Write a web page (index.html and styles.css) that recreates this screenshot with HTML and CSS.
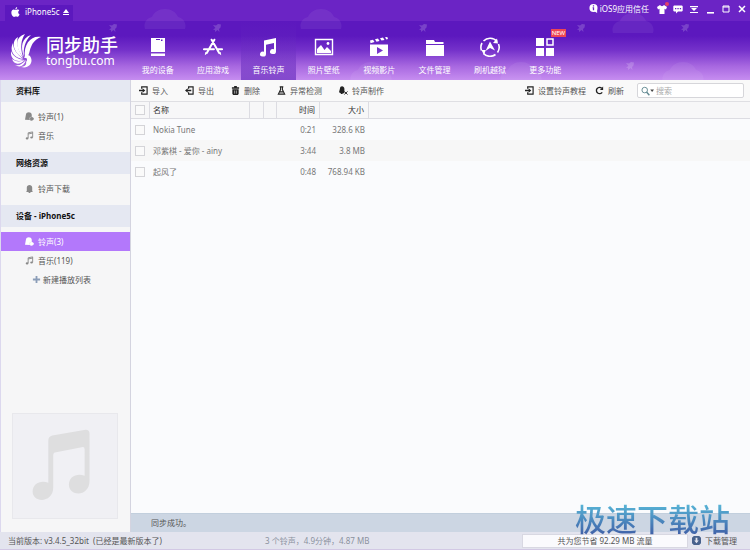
FILE: index.html
```html
<!DOCTYPE html>
<html lang="zh-CN">
<head>
<meta charset="UTF-8" />
<meta name="viewport" content="width=device-width, initial-scale=1" />
<title>同步助手</title>
<link rel="stylesheet" href="styles.css">
</head>
<body>

<!-- Shared icon shapes -->
<svg class="sprite" aria-hidden="true">
  <symbol id="cloud" viewBox="0 0 42 20"><path d="M1 20C-1 14 3 9 8 8 10 3 15 0 21 0s11 3 13 8c5 1 9 6 7 12z" /></symbol>
  <symbol id="plane" viewBox="0 0 8 8"><path d="M0 1l3 .5L5 0l3 .5-.5 3L6 5l.5 3-2-2L2 8V6L0 5.500 2.500 4z" /></symbol>
  <symbol id="note" viewBox="0 0 20 20"><path d="M6 3.500L18 1v13.500a3 2.500 0 1 1-2-2.300V6L8 7.700V17a3 2.500 0 1 1-2-2.300z" /></symbol>
  <symbol id="note-line" viewBox="0 0 10 10"><path d="M3.500 8V2l5-1v6M3.500 3.300l5-1" fill="none" stroke="currentColor" /><ellipse cx="2.300" cy="8.200" rx="1.500" ry="1.200" /><ellipse cx="7.300" cy="7.200" rx="1.500" ry="1.200" /></symbol>
  <symbol id="bell" viewBox="0 0 10 10"><path d="M2 8V4c0-4 6-4 6 0v4l1 1H1zM4 9h2v1H4z" /></symbol>
  <symbol id="bells" viewBox="0 0 10 10"><path d="M0 8.500L1 3C1.500-.5 7-.5 7.500 3v2.500C10 6 10.500 8 9 9 8 10 6 10 5.500 9z" /><path d="M7.200 5.500L5 6.500 5.500 9" fill="none" stroke="#ddd" stroke-width=".5" /></symbol>
  <symbol id="import" viewBox="0 0 10 10"><path d="M3 3V1h6v8H3V7" fill="none" stroke="currentColor" stroke-width="1.300" /><path d="M0 4.300h4V2.500L7 5 4 7.500V5.700H0z" /></symbol>
  <symbol id="export" viewBox="0 0 10 10"><path d="M4 3V1h5v8H4V7" fill="none" stroke="currentColor" stroke-width="1.300" /><path d="M7 4.300H3V2.500L0 5l3 2.500V5.700h4z" /></symbol>
</svg>

<div class="window">
  <header class="header">
    <div class="sky" aria-hidden="true">
      <svg class="cloud cloud-1"><use href="#cloud" /></svg>
      <svg class="cloud cloud-2"><use href="#cloud" /></svg>
      <svg class="cloud cloud-3"><use href="#cloud" /></svg>
      <svg class="cloud cloud-4"><use href="#cloud" /></svg>
      <svg class="cloud cloud-5"><use href="#cloud" /></svg>
      <svg class="cloud cloud-6"><use href="#cloud" /></svg>
      <svg class="plane plane-1"><use href="#plane" /></svg>
      <svg class="plane plane-2"><use href="#plane" /></svg>
      <svg class="plane plane-3"><use href="#plane" /></svg>
      <svg class="plane plane-4"><use href="#plane" /></svg>
      <svg class="plane plane-5"><use href="#plane" /></svg>
      <svg class="plane plane-6"><use href="#plane" /></svg>
    </div>

    <div class="titlebar">
      <button class="device-tab" type="button">
        <svg class="apple" viewBox="0 0 10 12"><path d="M7 0c0 2-1 3-2.200 3C4.700 1.500 6 .3 7 0zM5 3.700c1 0 1.500-.7 2.500-.6 1 0 1.800.7 2 1.200-2 1-1.500 3.700.4 4.400C9 11 8 12 7 11.800c-1-.4-2-.4-3 0C2 12.500 0 9.500 0 7c0-3 2-4.200 3.500-3.800z" /></svg>
        iPhone5c
        <svg class="eject" viewBox="0 0 6 6"><path d="M3 0l3 4H0zM0 5h6v1H0z" /></svg>
      </button>
      <div class="window-tools">
        <a class="trust" href="#"><svg viewBox="0 0 10 10"><circle cx="5" cy="4.500" r="4.500" /><path d="M6 8l3 2V6z" /><path d="M4.300 1.500h1.400v1.300H4.300zM4 3.700h1.700V7H4.300V4.700H4z" fill="#6822c4" /></svg>iOS9应用信任</a>
        <button class="tool skin" type="button" aria-label="皮肤"><svg viewBox="0 0 10 10"><path d="M0 3l3-2c1 1.500 3 1.500 4 0l3 2-1 2.500-1.500-.7V10h-5V4.800L1 5.500z" /></svg></button>
        <button class="tool" type="button" aria-label="反馈"><svg viewBox="0 0 10 10"><path d="M1 1.500h8l.7.700v4.600l-.7.700H5l-2 2v-2H1l-.7-.7V2.200z" /><path d="M2 4h1.300v1.300H2zM4.400 4h1.300v1.300H4.400zM6.800 4h1.300v1.300H6.800z" fill="#6822c4" /></svg></button>
        <button class="tool" type="button" aria-label="菜单"><svg viewBox="0 0 10 10"><path d="M1 2h8v1.200H1zM2 4h6L5 7zM1 8h8v1H1z" /></svg></button>
        <button class="tool" type="button" aria-label="最小化"><svg viewBox="0 0 10 10"><path d="M2 8h7v1.600H2z" /></svg></button>
        <button class="tool" type="button" aria-label="最大化"><svg viewBox="0 0 10 10"><path d="M2 2h6v6H2zM2 3h6" fill="none" stroke="#fff" /></svg></button>
        <button class="tool" type="button" aria-label="关闭"><svg viewBox="0 0 10 10"><path d="M2 2l6 6M8 2L2 8" stroke="#fff" stroke-width="1.500" /></svg></button>
      </div>
    </div>

    <div class="main-bar">
      <a class="brand" href="#">
        <svg class="brand-mark" viewBox="0 0 30 34">
          <path d="M30 3C21 1 12 9 14 24c5-2 4-7 6-11 2-5 5-8 10-10z" />
          <path d="M20 1c-9 3-11 11-7 22-1-9 1-16 7-22z" />
          <path d="M14 0C4 3 4 13 12 23 9 13 10 6 14 0z" />
          <path d="M7 3C-1 8 3 19 12 24 7 15 5 10 7 3z" />
          <path d="M2 9c-4 8 1 15 10 16C6 20 2 15 2 9z" />
          <path d="M0 17c-1 8 5 12 13 9C6 25 2 22 0 17z" />
          <path d="M1 25c2 6 8 6 13 1-5 2-9 2-13-1z" />
          <path d="M4 31c5 3 9 1 11-5-4 4-6 6-11 5z" />
          <path d="M10 33c8 2 12-4 10-9-1-4-6-4-7 0 3-1 4 2 2 4 1 2-1 5-5 5z" />
        </svg>
        <span class="brand-text"><strong>同步助手</strong><span>tongbu.com</span></span>
      </a>
      <nav class="nav">
        <a href="#"><svg viewBox="0 0 20 20"><path d="M3 1h14v14H3zM3 16.500h14V19H3z" /><path d="M8 2h4v1H8zM13 2.500h1.500V4H13z" fill="#5d19bd" /></svg>我的设备</a>
        <a href="#"><svg viewBox="0 0 22 20"><path d="M12.500 2L4.500 16M9.500 2l8 14M1 12.500h11M16 12.500h5" fill="none" stroke="#fff" stroke-width="2.200" stroke-linecap="round" /><path d="M2.500 15.500l3 1L2 19zM19.500 15.500l-3 1L20 19z" /></svg>应用游戏</a>
        <a class="active" href="#"><svg viewBox="0 0 20 20"><use href="#note" /></svg>音乐铃声</a>
        <a href="#"><svg viewBox="0 0 20 20"><path d="M1.500 2.500h17v15h-17z" fill="none" stroke="#fff" stroke-width="1.400" /><path d="M3 16v-4l4-4 3.500 5 2.500-3 4 4v2z" /><circle cx="14" cy="6.500" r="1.400" /></svg>照片壁纸</a>
        <a href="#"><svg viewBox="0 0 20 20"><path fill-rule="evenodd" d="M1 7.500h18V19H1zM8 10v7l6-3.500zM1 3.500L4 2.700 5.500 5l-4 1.200zM6 2.200l3-.7L10.500 4l-3 .7zM11 1.200l3-.7L15.500 3l-3 .6zM16 .2l2.300-.2.7 2-1.600.500z" /></svg>视频影片</a>
        <a href="#"><svg viewBox="0 0 20 20"><path d="M1 3h8l1 2h8.500v2H1zM1 8h18v11H1z" /></svg>文件管理</a>
        <a href="#"><svg viewBox="0 0 20 20"><path d="M3.500 4A9 9 0 0 1 17 4.500M18.500 7a9 9 0 0 1-1 8.500M15.500 17.500a9 9 0 0 1-12-1M1.500 13.500A9 9 0 0 1 2 6" fill="none" stroke="#fff" stroke-width="1.600" /><path d="M17 1.500l1 5-5-.5zM1.500 13h4.300L4 18z" /><path d="M10 4.500l5 9-5-2.500-4.500 3z" /></svg>刷机越狱</a>
        <a href="#"><svg viewBox="0 0 20 20"><path d="M1 1h8v8H1zM1 11h8v8H1zM11 11h8v8h-8z" /><path d="M12 2h6v6h-6z" fill="none" stroke="#fff" stroke-width="1.500" /></svg>更多功能<span class="badge">NEW</span></a>
      </nav>
    </div>
  </header>

  <div class="body">
    <aside class="sidebar">
      <section>
        <h2>资料库</h2>
        <a href="#"><svg><use href="#bells" /></svg>铃声(1)</a>
        <a href="#"><svg><use href="#note-line" /></svg>音乐</a>
      </section>
      <section>
        <h2>网络资源</h2>
        <a href="#"><svg><use href="#bell" /></svg>铃声下载</a>
      </section>
      <section>
        <h2>设备 - iPhone5c</h2>
        <a class="active" href="#"><svg><use href="#bells" /></svg>铃声(3)</a>
        <a href="#"><svg><use href="#note-line" /></svg>音乐(119)</a>
        <a class="new-list" href="#"><svg viewBox="0 0 10 10"><path d="M4 1h2v3h3v2H6v3H4V6H1V4h3z" /></svg>新建播放列表</a>
      </section>
      <div class="artwork">
        <svg viewBox="0 0 106 106"><path d="M36 27q0-4 4-5l34-6q4 0 4 4v48c0 17-21 16-21 4 0-8 8-12 16-9V36q0-3-3-2l-26 5q-3 0-3 3v33c0 16-21 16-21 4 0-8 8-12 16-9z" /></svg>
      </div>
    </aside>

    <main class="content">
      <div class="toolbar">
        <button type="button"><svg><use href="#import" /></svg>导入</button>
        <button type="button"><svg><use href="#export" /></svg>导出</button>
        <button type="button"><svg viewBox="0 0 10 10"><path d="M1 1.500h2.500V0h3v1.500H9V3H1zM1.500 3.500h7V9l-1 1h-5l-1-1z" /><path d="M4 5v3.500M6 5v3.500" stroke="#f8f8f8" stroke-width=".6" /></svg>删除</button>
        <button type="button"><svg viewBox="0 0 10 10"><path d="M3 1h4M4 1v3L1.500 9h7L6 4V1M3 6.500h4" fill="none" stroke="currentColor" stroke-width="1.200" /></svg>异常检测</button>
        <button type="button"><svg viewBox="0 0 10 10"><path d="M0 7l1-4c0-4 5-3.500 5 0v5H4v1H2V8z" /><path d="M6 6l3.500 3.500M9.500 6L6 9.500" stroke="currentColor" /></svg>铃声制作</button>
        <div class="toolbar-end">
          <button type="button"><svg><use href="#import" /></svg>设置铃声教程</button>
          <button type="button"><svg viewBox="0 0 10 10"><path d="M7.500 2.500A3.500 3.500 0 1 0 8 7" fill="none" stroke="currentColor" stroke-width="1.500" /><path d="M5.500 4.500L9 .5v4z" /></svg>刷新</button>
          <label class="search">
            <svg viewBox="0 0 14 10"><circle cx="4" cy="4" r="3" fill="none" stroke="#608890" /><path d="M6 6l3 3.500" stroke="#608890" stroke-width="1.500" /><path d="M10 3.500h4L12 6z" fill="#444" /></svg>
            <input type="search" placeholder="搜索" aria-label="搜索" />
          </label>
        </div>
      </div>

      <table class="tracks">
        <thead>
          <tr>
            <th class="check"><input type="checkbox" aria-label="全选" /></th>
            <th class="name">名称</th>
            <th class="slim-a"></th>
            <th class="slim-b"></th>
            <th class="time">时间</th>
            <th class="size">大小</th>
            <th class="rest"></th>
          </tr>
        </thead>
        <tbody>
          <tr>
            <td class="check"><input type="checkbox" aria-label="Nokia Tune" /></td>
            <td>Nokia Tune</td><td></td><td></td>
            <td class="time">0:21</td>
            <td class="size">328.6 KB</td><td></td>
          </tr>
          <tr>
            <td class="check"><input type="checkbox" aria-label="邓紫棋 - 爱你 - ainy" /></td>
            <td>邓紫棋 - 爱你 - ainy</td><td></td><td></td>
            <td class="time">3:44</td>
            <td class="size">3.8 MB</td><td></td>
          </tr>
          <tr>
            <td class="check"><input type="checkbox" aria-label="起风了" /></td>
            <td>起风了</td><td></td><td></td>
            <td class="time">0:48</td>
            <td class="size">768.94 KB</td><td></td>
          </tr>
        </tbody>
      </table>

      <p class="status">同步成功。</p>
    </main>
  </div>

  <footer class="footer">
    <span class="version">当前版本: v3.4.5_32bit&nbsp; (已经是最新版本了)</span>
    <span class="summary">3 个铃声，4.9分钟，4.87 MB</span>
    <span class="saved">共为您节省 92.29 MB 流量</span>
    <a class="downloads" href="#"><svg viewBox="0 0 10 10"><path fill-rule="evenodd" d="M2 0h6l2 2v6L8 10H2L0 8V2zM4 2v3H2.500L5 8l2.500-3H6V2z" /></svg>下载管理</a>
  </footer>
  <div class="watermark">极速下载站</div>
</div>

</body>
</html>
```

FILE: styles.css
```css
* {
  box-sizing: border-box;
}
body {
  margin: 0;
  font-family: "Noto Sans", "Noto Sans CJK SC", sans-serif;
  font-size: 8px;
  line-height: 12px;
  color: #555;
}
a {
  color: inherit;
  text-decoration: none;
}
button {
  padding: 0;
  border: none;
  background: none;
  color: inherit;
  font: inherit;
  cursor: pointer;
}
svg {
  fill: currentColor;
  flex: none;
}
.sprite {
  position: absolute;
  width: 0;
  height: 0;
}
.window {
  position: relative;
  display: flex;
  flex-direction: column;
  min-height: 100vh;
}

/* header */
.header {
  position: relative;
  color: #fff;
  background: linear-gradient(#5c18be 0, #5c18be 36px, #7431ca 50px, #a767e0 66px, #c68df0 80px);
}
.sky {
  position: absolute;
  inset: 0;
  overflow: hidden;
}
.cloud,
.plane {
  position: absolute;
  z-index: 1;
  color: #fff;
}
.cloud {
  width: 42px;
  height: 20px;
  opacity: 0.06;
}
.plane {
  width: 8px;
  height: 8px;
  opacity: 0.18;
}
.cloud-1 { left: 144px; top: 9px; }
.cloud-2 { left: 300px; top: 9px; }
.cloud-3 { left: 612px; top: 13px; }
.cloud-4 { left: 350px; top: 62px; }
.cloud-5 { left: 500px; top: 62px; }
.cloud-6 { left: 662px; top: 62px; }
.plane-1 { left: 109px; top: 24px; }
.plane-2 { left: 213px; top: 24px; }
.plane-3 { left: 419px; top: 24px; }
.plane-4 { left: 577px; top: 24px; }
.plane-5 { left: 681px; top: 24px; }
.plane-6 { left: 626px; top: 62px; }

.titlebar {
  display: flex;
  justify-content: space-between;
  height: 21px;
  padding-left: 5px;
  background: #6b24c5;
}
.device-tab {
  display: flex;
  align-items: center;
  gap: 3px;
  align-self: flex-end;
  position: relative;
  height: 16px;
  padding: 0 4px 2px 6px;
  background: #5c18be;
}
.apple {
  width: 9px;
  height: 10px;
  margin-right: 2px;
}
.eject {
  width: 6px;
  height: 6px;
}
.window-tools {
  position: relative;
  display: flex;
  align-items: center;
  gap: 6px;
  height: 17px;
  padding-right: 3px;
}
.trust {
  display: flex;
  align-items: center;
  gap: 2px;
  margin-right: 2px;
}
.trust svg {
  width: 9px;
  height: 9px;
}
.tool {
  position: relative;
  display: flex;
}
.tool svg {
  width: 10px;
  height: 10px;
}
.skin::after {
  content: "";
  position: absolute;
  top: -2px;
  right: -2px;
  width: 4px;
  height: 4px;
  border-radius: 50%;
  background: #e0406c;
}

.main-bar {
  position: relative;
  display: flex;
  height: 59px;
}
.brand {
  display: flex;
  flex: none;
  gap: 5px;
  width: 130px;
  padding: 13px 0 0 11px;
}
.brand-mark {
  width: 30px;
  height: 34px;
}
.brand-text {
  display: flex;
  flex-direction: column;
  padding-top: 2px;
}
.brand-text strong {
  font-size: 18px;
  line-height: 18px;
  font-weight: 500;
}
.brand-text span {
  font-size: 12px;
  line-height: 14px;
}
.nav {
  display: grid;
  grid-template-columns: repeat(8, 1fr);
  width: 443px;
}
.nav a {
  position: relative;
  display: flex;
  flex-direction: column;
  align-items: center;
  gap: 7px;
  padding-top: 16px;
}
.nav svg {
  width: 20px;
  height: 20px;
}
.nav .active {
  background: linear-gradient(rgba(104, 45, 190, 0) 0, rgba(104, 45, 190, 0.7) 100%);
}
.badge {
  position: absolute;
  top: 8px;
  left: 33px;
  padding: 0 1px;
  background: #ee4653;
  font-size: 6px;
  line-height: 8px;
}

.body {
  display: flex;
  flex: 1;
}

/* sidebar */
.sidebar {
  display: flex;
  flex-direction: column;
  width: 131px;
  border-right: 1px solid #d4d4e0;
  border-left: 1px solid #dcd8ee;
  background: #f6f6f7;
}
.sidebar section {
  padding-bottom: 7px;
}
.sidebar h2 {
  margin: 0 0 5px;
  padding-left: 15px;
  background: #e5e8f2;
  color: #111;
  font-size: 8px;
  line-height: 22px;
}
.sidebar section a {
  display: flex;
  align-items: center;
  gap: 4px;
  height: 19px;
  padding-left: 24px;
}
.sidebar section svg {
  width: 9px;
  height: 9px;
  color: #888;
}
.sidebar .active {
  background: #b378fb;
  color: #fff;
}
.sidebar section .active svg {
  color: #fff;
}
.sidebar section .new-list {
  gap: 2px;
  padding-left: 31px;
}
.sidebar section .new-list svg {
  color: #8b9db8;
}
.artwork {
  display: flex;
  margin: auto 12px 13px 11px;
  border: 1px solid #e8e8ec;
  background: #f0f0f4;
}
.artwork svg {
  width: 100%;
  color: #dededf;
}

/* content */
.content {
  display: flex;
  flex: 1;
  flex-direction: column;
  min-width: 0;
  background: #fafbfd;
}
.toolbar {
  display: flex;
  align-items: center;
  gap: 17px;
  height: 22px;
  padding: 0 6px 0 8px;
  border-bottom: 1px solid #dfdfe3;
  background: #f9f9f9;
}
.toolbar button {
  display: flex;
  align-items: center;
  gap: 4px;
}
.toolbar button svg {
  width: 9px;
  height: 9px;
  color: #222;
}
.toolbar-end {
  display: flex;
  align-items: center;
  gap: 9px;
  margin-left: auto;
}
.search {
  display: flex;
  align-items: center;
  gap: 2px;
  width: 107px;
  height: 15px;
  margin-left: 4px;
  padding: 0 3px;
  border: 1px solid #d6d6da;
  border-radius: 2px;
  background: #fff;
}
.search svg {
  width: 13px;
  height: 10px;
}
.search input {
  width: 100%;
  min-width: 0;
  padding: 0;
  border: none;
  outline: none;
  background: none;
  font: inherit;
}
.search input::placeholder {
  color: #aaa;
}

.tracks {
  width: 100%;
  border-collapse: separate;
  border-spacing: 0;
  table-layout: fixed;
}
.tracks th,
.tracks td {
  height: 21px;
  padding: 0 4px 0 3px;
  text-align: left;
  white-space: nowrap;
}
.tracks th {
  height: 17px;
  border-right: 1px solid #dcdce2;
  border-bottom: 1px solid #dcdce2;
  background: #f7f7f8;
  color: #333;
  font-weight: normal;
}
.tracks td {
  color: #777;
}
.tracks tbody tr:nth-child(even) {
  background: #f7f7f7;
}
.tracks .name { width: 100px; }
.tracks .slim-a { width: 14px; }
.tracks .slim-b { width: 13px; }
.tracks .time {
  width: 43px;
  text-align: right;
}
.tracks .size {
  width: 49px;
  text-align: right;
}
.tracks .rest {
  border-right: none;
}
.tracks .check {
  width: 19px;
  padding: 0 4px;
}
.tracks input {
  display: block;
  appearance: none;
  width: 10px;
  height: 10px;
  margin: 0;
  border: 1px solid #d4d4d8;
  background: #fafafa;
}
.status {
  margin: auto 0 0;
  padding-left: 20px;
  border-top: 1px solid #c2cfdd;
  background: #ccd6e3;
  line-height: 18px;
}

/* footer */
.footer {
  display: flex;
  align-items: center;
  height: 18px;
  padding: 0 13px 0 8px;
  border-bottom: 1px solid #d2c8e4;
  background: #e3e4ee;
}
.version {
  width: 257px;
}
.summary {
  color: #8b929e;
}
.saved {
  width: 166px;
  margin-left: auto;
  border: 1px solid #d8d8e2;
  background: #fafafd;
  text-align: center;
}
.downloads {
  display: flex;
  align-items: center;
  gap: 4px;
  margin-left: 4px;
}
.downloads svg {
  width: 9px;
  height: 9px;
  color: #48618c;
}
.watermark {
  position: absolute;
  right: 20px;
  bottom: 15px;
  background: linear-gradient(#58b8d8, #4060a8);
  background-clip: text;
  color: transparent;
  font-size: 31px;
  font-weight: 500;
  line-height: 32px;
  pointer-events: none;
}
```
